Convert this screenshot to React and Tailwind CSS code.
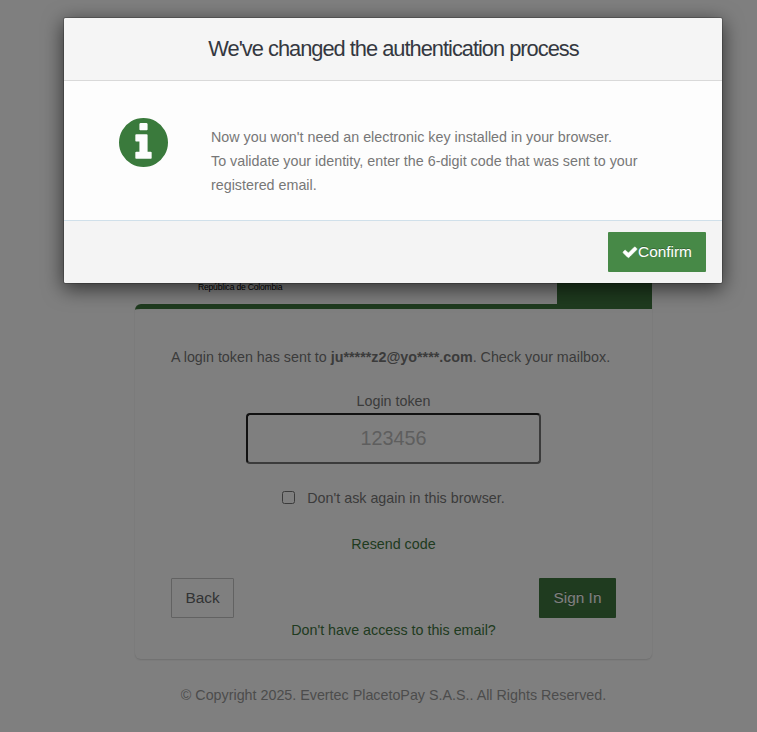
function InfoIcon() {
  return (
    <svg className="block h-[49px] w-[49px]" viewBox="0 0 1536 1536" fill="#3a7a3c">
      <path d="M1024 1248v-160q0-14-9-23t-23-9h-96V544q0-14-9-23t-23-9H544q-14 0-23 9t-9 23v160q0 14 9 23t23 9h96v320h-96q-14 0-23 9t-9 23v160q0 14 9 23t23 9h448q14 0 23-9t9-23zM896 352V192q0-14-9-23t-23-9H672q-14 0-23 9t-9 23v160q0 14 9 23t23 9h192q14 0 23-9t9-23zm640 416q0 209-103 385.500T1153.500 1433 768 1536t-385.500-103T103 1153.500 0 768t103-385.500T382.500 103 768 0t385.500 103T1433 382.500 1536 768z" />
    </svg>
  );
}

function CheckIcon() {
  return (
    <svg className="-mt-px block h-4 w-4" viewBox="0 0 1792 1792" fill="#fff" stroke="#fff" strokeWidth="70" strokeLinejoin="round">
      <path d="M1671 566q0 40-28 68l-724 724-136 136q-28 28-68 28t-68-28l-136-136-362-362q-28-28-28-68t28-68l136-136q28-28 68-28t68 28l294 295 656-657q28-28 68-28t68 28l136 136q28 28 28 68z" />
    </svg>
  );
}

function LoginPage() {
  return (
    <div className="mx-auto w-[517px] pt-[264px]">
      <header className="flex h-10 items-stretch justify-between">
        <span className="pl-[63px] pt-[17px] text-[8.6px] leading-3 tracking-[-0.22px] text-black">República de Colombia</span>
        <div className="w-[95px] bg-[#3f763f]" />
      </header>
      <main className="flex h-[355px] flex-col items-center rounded-md rounded-tr-none border-t-[5px] border-[#3f763f] px-9 pt-9 shadow-[0_1px_2px_rgba(0,0,0,0.14)]">
        <p className="self-start whitespace-nowrap leading-6">
          A login token has sent to <b>ju*****z2@yo****.com</b>. Check your mailbox.
        </p>
        <label className="mt-5 leading-6">Login token</label>
        <input
          className="h-[51px] w-[295px] rounded border-2 border-b-[#767676] border-l-[#222] border-r-[#767676] border-t-[#222] bg-transparent text-center text-[19.8px] outline-none placeholder:text-[#bcbcbc]"
          placeholder="123456"
        />
        <label className="mt-[22px] flex items-center gap-3 leading-6">
          <input type="checkbox" className="mb-0.5 h-[13px] w-[13px]" />
          Don't ask again in this browser.
        </label>
        <a className="mt-[22px] leading-6 text-[#3f763f]">Resend code</a>
        <div className="mt-[22px] flex w-full justify-between text-[15.4px]">
          <button className="h-10 w-[63px] rounded-[1px] border border-[#c4c4c4] text-[#646669]">Back</button>
          <button className="h-10 w-[77px] rounded-[1px] bg-[#3f763f] text-white [text-shadow:0_-1px_0_rgba(0,0,0,0.25)]">Sign In</button>
        </div>
        <a className="leading-6 text-[#3f763f]">Don't have access to this email?</a>
      </main>
      <footer className="pt-6 text-center leading-6 text-[#999]">
        © Copyright 2025. Evertec PlacetoPay S.A.S.. All Rights Reserved.
      </footer>
    </div>
  );
}

function Modal() {
  return (
    <div className="absolute inset-0 bg-black/50">
      <section className="ml-[63px] mt-[17px] w-[660px] overflow-hidden rounded-[3px] border border-black/20 bg-[#fdfdfd] bg-clip-padding shadow-[0_5px_20px_rgba(0,0,0,0.6)]">
        <h1 className="h-[63px] border-b border-[#d9d9d9] bg-[#f5f5f5] pl-px text-center text-[21.84px] leading-[61px] tracking-[-1px] text-[#343840]">
          We've changed the authentication process
        </h1>
        <div className="flex h-[139px] items-start pl-[55px] pt-[37px]">
          <InfoIcon />
          <p className="ml-[43px] mt-[7px] w-[440px] leading-6 text-[#777]">
            Now you won't need an electronic key installed in your browser.
            <br />
            To validate your identity, enter the 6-digit code that was sent to your registered email.
          </p>
        </div>
        <div className="flex h-[63px] justify-end border-t border-[#d0e0ea] bg-[#f4f4f4] pr-4 pt-[11px]">
          <button className="flex h-10 w-[98px] items-center justify-center rounded-[1px] bg-[#478947] text-[15.4px] text-white [text-shadow:0_-1px_0_rgba(0,0,0,0.25)]">
            <CheckIcon />
            Confirm
          </button>
        </div>
      </section>
    </div>
  );
}

export default function App() {
  return (
    <div className="relative h-[732px] w-[757px] overflow-hidden bg-white font-['Liberation_Sans',Arial,sans-serif] text-[14.3px] text-[#777]">
      <div className="pl-[30px]">
        <LoginPage />
      </div>
      <Modal />
    </div>
  );
}
